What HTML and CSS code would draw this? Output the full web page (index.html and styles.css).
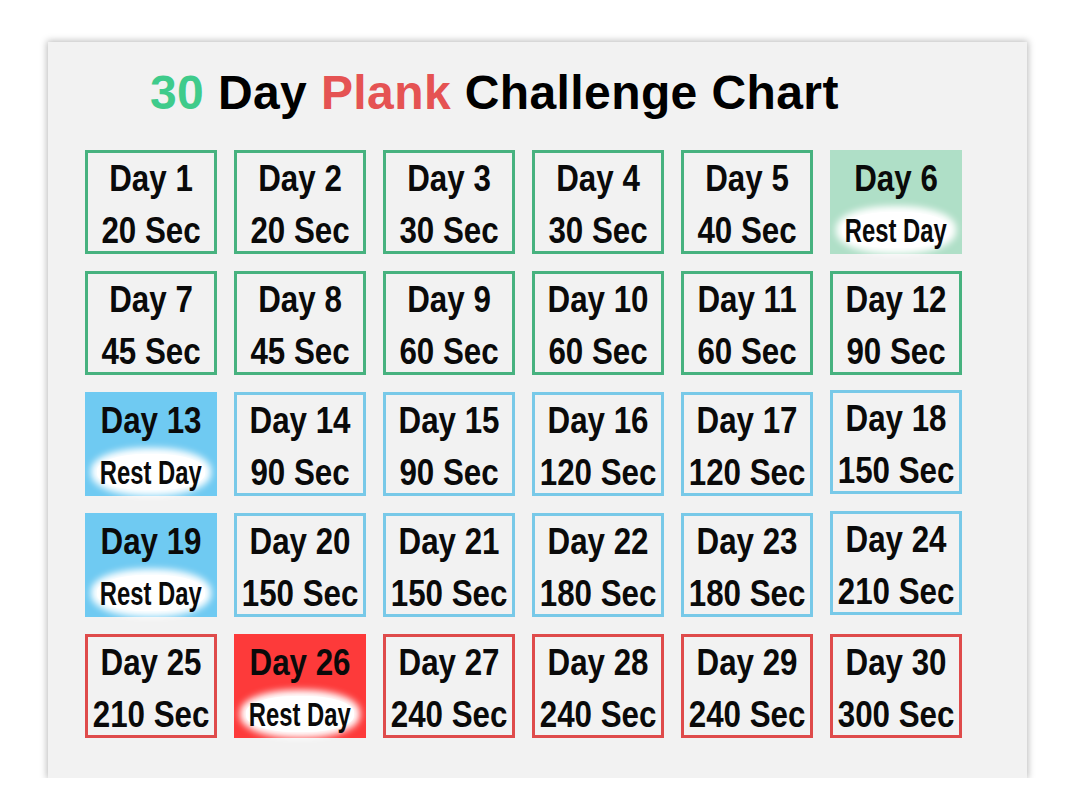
FILE: index.html
```html
<!DOCTYPE html>
<html lang="en">
<head>
<meta charset="utf-8">
<title>30 Day Plank Challenge Chart</title>
<link rel="stylesheet" href="styles.css">
</head>
<body>
<main class="card">
  <h1 class="title"><span class="t-green">30</span> Day <span class="t-red">Plank</span> Challenge Chart</h1>
  <div class="grid">
    <div class="cell green"><div class="line"><span class="txt">Day 1</span></div><div class="line"><span class="txt">20 Sec</span></div></div>
    <div class="cell green"><div class="line"><span class="txt">Day 2</span></div><div class="line"><span class="txt">20 Sec</span></div></div>
    <div class="cell green"><div class="line"><span class="txt">Day 3</span></div><div class="line"><span class="txt">30 Sec</span></div></div>
    <div class="cell green"><div class="line"><span class="txt">Day 4</span></div><div class="line"><span class="txt">30 Sec</span></div></div>
    <div class="cell green"><div class="line"><span class="txt">Day 5</span></div><div class="line"><span class="txt">40 Sec</span></div></div>
    <div class="cell green rest"><div class="line"><span class="txt">Day 6</span></div><div class="line"><span class="glow"><span class="rtxt">Rest Day</span></span></div></div>

    <div class="cell green"><div class="line"><span class="txt">Day 7</span></div><div class="line"><span class="txt">45 Sec</span></div></div>
    <div class="cell green"><div class="line"><span class="txt">Day 8</span></div><div class="line"><span class="txt">45 Sec</span></div></div>
    <div class="cell green"><div class="line"><span class="txt">Day 9</span></div><div class="line"><span class="txt">60 Sec</span></div></div>
    <div class="cell green"><div class="line"><span class="txt">Day 10</span></div><div class="line"><span class="txt">60 Sec</span></div></div>
    <div class="cell green"><div class="line"><span class="txt">Day 11</span></div><div class="line"><span class="txt">60 Sec</span></div></div>
    <div class="cell green"><div class="line"><span class="txt">Day 12</span></div><div class="line"><span class="txt">90 Sec</span></div></div>

    <div class="cell blue rest"><div class="line"><span class="txt">Day 13</span></div><div class="line"><span class="glow"><span class="rtxt">Rest Day</span></span></div></div>
    <div class="cell blue"><div class="line"><span class="txt">Day 14</span></div><div class="line"><span class="txt">90 Sec</span></div></div>
    <div class="cell blue"><div class="line"><span class="txt">Day 15</span></div><div class="line"><span class="txt">90 Sec</span></div></div>
    <div class="cell blue"><div class="line"><span class="txt">Day 16</span></div><div class="line"><span class="txt">120 Sec</span></div></div>
    <div class="cell blue"><div class="line"><span class="txt">Day 17</span></div><div class="line"><span class="txt">120 Sec</span></div></div>
    <div class="cell blue up"><div class="line"><span class="txt">Day 18</span></div><div class="line"><span class="txt">150 Sec</span></div></div>

    <div class="cell blue rest"><div class="line"><span class="txt">Day 19</span></div><div class="line"><span class="glow"><span class="rtxt">Rest Day</span></span></div></div>
    <div class="cell blue"><div class="line"><span class="txt">Day 20</span></div><div class="line"><span class="txt">150 Sec</span></div></div>
    <div class="cell blue"><div class="line"><span class="txt">Day 21</span></div><div class="line"><span class="txt">150 Sec</span></div></div>
    <div class="cell blue"><div class="line"><span class="txt">Day 22</span></div><div class="line"><span class="txt">180 Sec</span></div></div>
    <div class="cell blue"><div class="line"><span class="txt">Day 23</span></div><div class="line"><span class="txt">180 Sec</span></div></div>
    <div class="cell blue up"><div class="line"><span class="txt">Day 24</span></div><div class="line"><span class="txt">210 Sec</span></div></div>

    <div class="cell red"><div class="line"><span class="txt">Day 25</span></div><div class="line"><span class="txt">210 Sec</span></div></div>
    <div class="cell red rest"><div class="line"><span class="txt">Day 26</span></div><div class="line"><span class="glow"><span class="rtxt">Rest Day</span></span></div></div>
    <div class="cell red"><div class="line"><span class="txt">Day 27</span></div><div class="line"><span class="txt">240 Sec</span></div></div>
    <div class="cell red"><div class="line"><span class="txt">Day 28</span></div><div class="line"><span class="txt">240 Sec</span></div></div>
    <div class="cell red"><div class="line"><span class="txt">Day 29</span></div><div class="line"><span class="txt">240 Sec</span></div></div>
    <div class="cell red"><div class="line"><span class="txt">Day 30</span></div><div class="line"><span class="txt">300 Sec</span></div></div>
  </div>
</main>
</body>
</html>
```

FILE: styles.css
```css
html, body {
  margin: 0;
  padding: 0;
  background: #ffffff;
}

body {
  font-family: "Liberation Sans", Arial, sans-serif;
  color: #000;
}

.card {
  margin: 42px 0 0 48px;
  width: 979px;
  height: 736px;
  box-sizing: border-box;
  background: #f2f2f2;
  box-shadow: 0 0 7px 1px rgba(0, 0, 0, 0.28);
  padding: 23px 0 0 102px;
}

.title {
  margin: 0;
  font-size: 48px;
  line-height: 56px;
  font-weight: 700;
  letter-spacing: 0.4px;
  color: #000;
  white-space: nowrap;
}

.t-green { color: #3fcb8b; }
.t-red { color: #e55353; }

.grid {
  margin: 29px 0 0 -65px;
  display: grid;
  grid-template-columns: repeat(6, 132px);
  grid-auto-rows: 104px;
  column-gap: 17px;
  row-gap: 17px;
}

.cell {
  box-sizing: border-box;
  border: 3px solid transparent;
  background: #f2f2f2;
  display: flex;
  flex-direction: column;
  overflow: visible;
}

.cell.green { border-color: #47b27f; }
.cell.blue { border-color: #78c9e8; }
.cell.red { border-color: #df4b4b; }

.cell.green.rest { background: #afdfc7; border-color: #afdfc7; }
.cell.blue.rest { background: #6fcaf2; border-color: #6fcaf2; }
.cell.red.rest { background: #fd3a3a; border-color: #fd3a3a; }

.cell.up { transform: translateY(-2px); }

.line {
  height: 52px;
  flex: none;
  display: flex;
  justify-content: center;
  align-items: center;
}

.txt {
  display: inline-block;
  flex: none;
  font-size: 36px;
  line-height: 52px;
  font-weight: 700;
  white-space: nowrap;
  transform: scaleX(0.87);
  color: #0a0a0a;
}

.glow {
  display: inline-flex;
  flex: none;
  justify-content: center;
  align-items: center;
  width: 108px;
  height: 36px;
  margin-top: -2px;
  background: #ffffff;
  border-radius: 45%;
  box-shadow: 0 0 7px 6px #ffffff;
}

.rtxt {
  display: inline-block;
  flex: none;
  font-size: 34px;
  line-height: 36px;
  font-weight: 700;
  white-space: nowrap;
  transform: scaleX(0.7);
  color: #0a0a0a;
}
```
